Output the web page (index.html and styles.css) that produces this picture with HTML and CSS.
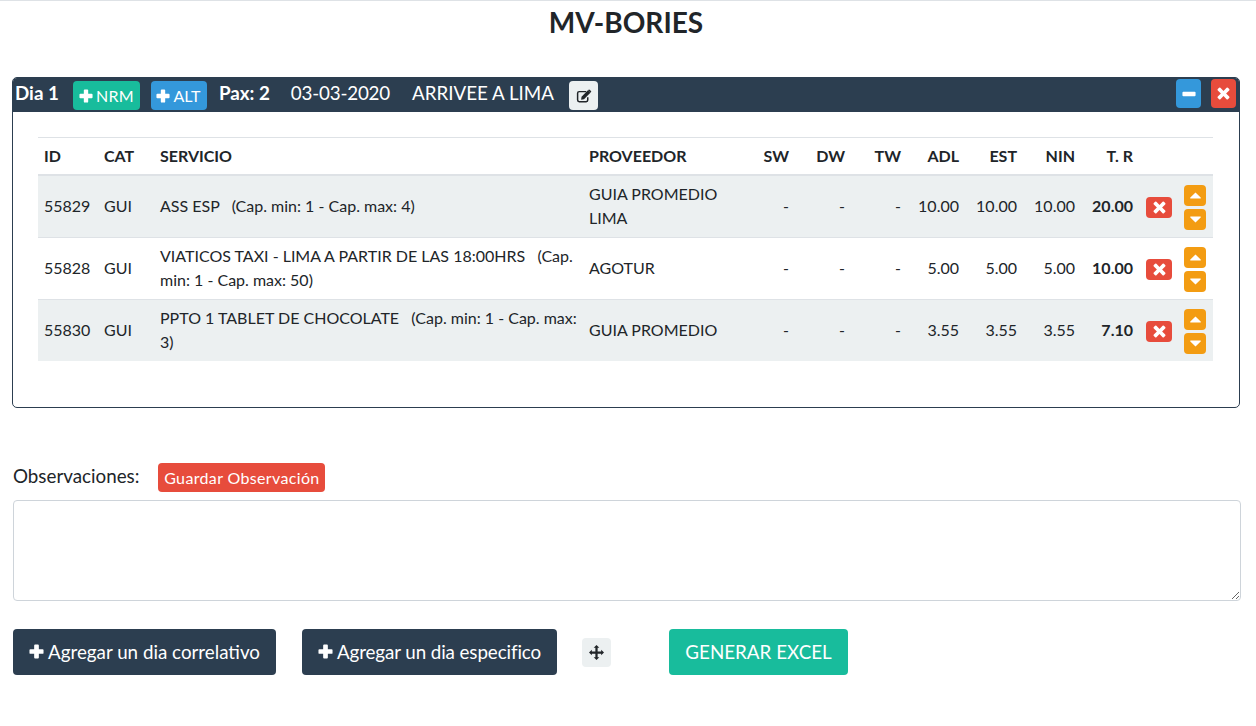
FILE: index.html
```html
<!DOCTYPE html>
<html lang="es">
<head>
<meta charset="utf-8">
<title>MV-BORIES</title>
<link rel="stylesheet" href="styles.css">
</head>
<body>
<svg class="defs" width="0" height="0" aria-hidden="true">
  <symbol id="i-plus" viewBox="0 0 16 16"><path d="M5.500 1.500a1 1 0 0 1 1-1h3a1 1 0 0 1 1 1v4h4a1 1 0 0 1 1 1v3a1 1 0 0 1-1 1h-4v4a1 1 0 0 1-1 1h-3a1 1 0 0 1-1-1v-4h-4a1 1 0 0 1-1-1v-3a1 1 0 0 1 1-1h4z" fill="currentColor"/></symbol>
  <symbol id="i-minus" viewBox="0 0 16 16"><rect x=".5" y="5.500" width="15" height="5" rx="1" fill="currentColor"/></symbol>
  <symbol id="i-times" viewBox="0 0 16 16"><path d="M4.200 1 8 4.800 11.800 1a1.100 1.100 0 0 1 1.600 0L15 2.600a1.100 1.100 0 0 1 0 1.600L11.200 8l3.800 3.800a1.100 1.100 0 0 1 0 1.600L13.400 15a1.100 1.100 0 0 1-1.600 0L8 11.200 4.200 15a1.100 1.100 0 0 1-1.600 0L1 13.400a1.100 1.100 0 0 1 0-1.600L4.800 8 1 4.200a1.100 1.100 0 0 1 0-1.600L2.600 1a1.100 1.100 0 0 1 1.600 0z" fill="currentColor"/></symbol>
  <symbol id="i-up" viewBox="0 0 16 10"><path d="M8 .5 15.500 8a.8.8 0 0 1-.6 1.400H1.100A.8.8 0 0 1 .5 8z" fill="currentColor"/></symbol>
  <symbol id="i-down" viewBox="0 0 16 10"><path d="M8 9.500.5 2A.8.8 0 0 1 1.100.6h13.800a.8.8 0 0 1 .6 1.400z" fill="currentColor"/></symbol>
  <symbol id="i-edit" viewBox="0 0 18 16"><path d="M11.500 3H3.500A1.800 1.800 0 0 0 1.700 4.800v7.900a1.800 1.800 0 0 0 1.800 1.800h8a1.800 1.800 0 0 0 1.800-1.800V9.500" fill="none" stroke="currentColor" stroke-width="1.700"/><path d="M6.200 8.800 13.500 1.500l2.800 2.800-7.300 7.300-3.300.6z" fill="currentColor"/><path d="M14.300.8a.8.8 0 0 1 1.100 0l1.600 1.600a.8.800 0 0 1 0 1.100l-.7.700-2.700-2.700z" fill="currentColor"/></symbol>
  <symbol id="i-move" viewBox="0 0 16 16"><path d="M8 0l3 3H9.200v3.800H13V5l3 3-3 3V9.200H9.200V13H11l-3 3-3-3h1.800V9.200H3V11L0 8l3-3v1.800h3.800V3H5z" fill="currentColor"/></symbol>
</svg>

<main class="page">
  <h1 class="title">MV-BORIES</h1>

  <section class="panel">
    <header class="panel-head">
      <div class="head-left">
        <strong class="day">Dia 1</strong>
        <button class="btn btn-sm btn-green"><svg class="ico"><use href="#i-plus"/></svg>NRM</button>
        <button class="btn btn-sm btn-blue"><svg class="ico"><use href="#i-plus"/></svg>ALT</button>
        <strong class="pax">Pax: 2</strong>
        <span class="date">03-03-2020</span>
        <span class="route">ARRIVEE A LIMA</span>
        <button class="btn btn-icon btn-light"><svg class="ico-edit"><use href="#i-edit"/></svg></button>
      </div>
      <div class="head-right">
        <button class="btn btn-icon btn-blue"><svg class="ico"><use href="#i-minus"/></svg></button>
        <button class="btn btn-icon btn-red"><svg class="ico-x"><use href="#i-times"/></svg></button>
      </div>
    </header>

    <div class="panel-body">
      <table class="grid">
        <colgroup>
          <col class="c-id"><col class="c-cat"><col class="c-serv"><col class="c-prov">
          <col class="c-sw"><col class="c-dw"><col class="c-tw"><col class="c-adl">
          <col class="c-est"><col class="c-nin"><col class="c-tr"><col class="c-del"><col class="c-ord">
        </colgroup>
        <thead>
          <tr>
            <th>ID</th><th>CAT</th><th>SERVICIO</th><th>PROVEEDOR</th>
            <th class="num">SW</th><th class="num">DW</th><th class="num">TW</th>
            <th class="num">ADL</th><th class="num">EST</th><th class="num">NIN</th><th class="num">T. R</th>
            <th></th><th></th>
          </tr>
        </thead>
        <tbody>
          <tr>
            <td>55829</td><td>GUI</td>
            <td>ASS ESP &nbsp;&nbsp;(Cap. min: 1 - Cap. max: 4)</td>
            <td>GUIA PROMEDIO LIMA</td>
            <td class="num">-</td><td class="num">-</td><td class="num">-</td>
            <td class="num">10.00</td><td class="num">10.00</td><td class="num">10.00</td>
            <td class="num total">20.00</td>
            <td><button class="btn btn-del"><svg class="ico-x"><use href="#i-times"/></svg></button></td>
            <td><div class="order"><button class="btn btn-ord"><svg class="caret"><use href="#i-up"/></svg></button><button class="btn btn-ord"><svg class="caret"><use href="#i-down"/></svg></button></div></td>
          </tr>
          <tr>
            <td>55828</td><td>GUI</td>
            <td>VIATICOS TAXI - LIMA A PARTIR DE LAS 18:00HRS &nbsp;&nbsp;(Cap. min: 1 - Cap. max: 50)</td>
            <td>AGOTUR</td>
            <td class="num">-</td><td class="num">-</td><td class="num">-</td>
            <td class="num">5.00</td><td class="num">5.00</td><td class="num">5.00</td>
            <td class="num total">10.00</td>
            <td><button class="btn btn-del"><svg class="ico-x"><use href="#i-times"/></svg></button></td>
            <td><div class="order"><button class="btn btn-ord"><svg class="caret"><use href="#i-up"/></svg></button><button class="btn btn-ord"><svg class="caret"><use href="#i-down"/></svg></button></div></td>
          </tr>
          <tr>
            <td>55830</td><td>GUI</td>
            <td>PPTO 1 TABLET DE CHOCOLATE &nbsp;&nbsp;(Cap. min: 1 - Cap. max: 3)</td>
            <td>GUIA PROMEDIO</td>
            <td class="num">-</td><td class="num">-</td><td class="num">-</td>
            <td class="num">3.55</td><td class="num">3.55</td><td class="num">3.55</td>
            <td class="num total">7.10</td>
            <td><button class="btn btn-del"><svg class="ico-x"><use href="#i-times"/></svg></button></td>
            <td><div class="order"><button class="btn btn-ord"><svg class="caret"><use href="#i-up"/></svg></button><button class="btn btn-ord"><svg class="caret"><use href="#i-down"/></svg></button></div></td>
          </tr>
        </tbody>
      </table>
    </div>
  </section>

  <section class="notes">
    <div class="notes-head">
      <label class="notes-label" for="obs">Observaciones:</label>
      <button class="btn btn-save">Guardar Observación</button>
    </div>
    <textarea id="obs" class="notes-box"></textarea>
  </section>

  <div class="actions">
    <button class="btn btn-lg btn-dark"><svg class="ico-lg"><use href="#i-plus"/></svg>Agregar un dia correlativo</button>
    <button class="btn btn-lg btn-dark"><svg class="ico-lg"><use href="#i-plus"/></svg>Agregar un dia especifico</button>
    <button class="btn btn-icon btn-move"><svg class="ico-move"><use href="#i-move"/></svg></button>
    <button class="btn btn-lg btn-green btn-excel">GENERAR EXCEL</button>
  </div>
</main>
</body>
</html>
```
FILE: styles.css
```css
* { box-sizing: border-box; }
html, body { margin: 0; padding: 0; }
body {
  font-family: Lato, "Liberation Sans", sans-serif;
  font-size: 16px;
  line-height: 24px;
  color: #212529;
  background: #fff;
}
.defs { position: absolute; }
.page {
  border-top: 1px solid #dee2e6;
  padding: 0 15px 0 12px;
}
.title {
  margin: 0;
  padding: 3px 1px 0 0;
  height: 76px;
  font-size: 28px;
  line-height: 36px;
  font-weight: 700;
  text-align: center;
}

.btn {
  display: inline-flex;
  align-items: center;
  justify-content: center;
  border: 0;
  border-radius: 4px;
  padding: 0;
  color: #fff;
  font-family: inherit;
  cursor: pointer;
}
.btn-green { background: #18bc9c; }
.btn-blue { background: #3498db; }
.btn-red { background: #e74c3c; }
.btn-dark { background: #2c3e50; }
.btn-light { background: #ecf0f1; color: #212529; }

.panel {
  width: 1228px;
  height: 331px;
  border: 1px solid #2c3e50;
  border-radius: 5px;
  overflow: hidden;
}
.panel-head {
  display: flex;
  justify-content: space-between;
  height: 34px;
  background: #2c3e50;
  color: #fff;
  padding: 1px 3px 0 2px;
}
.head-left { display: flex; align-items: flex-start; font-size: 18.8px; line-height: 28px; }
.head-right { display: flex; gap: 10px; }
.day { margin-right: 14px; }
.btn-sm {
  height: 29px;
  margin-top: 2px;
  font-size: 16px;
  gap: 3px;
}
.head-left .btn-green { width: 67px; margin-right: 11px; letter-spacing: .3px; }
.head-left .btn-blue { width: 56px; margin-right: 12px; padding-right: 1px; }
.pax { margin-right: 21px; }
.date { margin-right: 22px; letter-spacing: -.2px; }
.route { margin-right: 15px; }
.btn-icon { width: 25px; height: 29px; }
.head-left .btn-icon { width: 29px; margin-top: 2px; }
.ico { width: 14px; height: 14px; }
.ico-x { width: 13px; height: 13px; }
.ico-edit { width: 16px; height: 14px; }

.panel-body { padding: 25px 26px 0 25px; }
.grid {
  width: 1175px;
  table-layout: fixed;
  border-collapse: collapse;
  border-top: 1px solid #dee2e6;
}
.c-id { width: 60px; }
.c-cat { width: 56px; }
.c-serv { width: 429px; }
.c-prov { width: 169px; }
.c-sw { width: 43px; }
.c-dw { width: 56px; }
.c-tw { width: 56px; }
.c-adl { width: 58px; }
.c-est { width: 58px; }
.c-nin { width: 58px; }
.c-tr { width: 58px; }
.c-del { width: 39px; }
.c-ord { width: 35px; }
.grid th {
  padding: 6px;
  height: 37px;
  text-align: left;
  font-weight: 700;
  border-bottom: 2px solid #dee2e6;
  white-space: nowrap;
}
.grid td {
  padding: 6px;
  height: 62px;
  vertical-align: middle;
  background: #ecf0f1;
  border-bottom: 1px solid #dee2e6;
}
.grid tbody tr:nth-child(even) td { background: #fff; }
.grid tbody tr:last-child td { border-bottom: 0; }
.grid .num { text-align: right; }
.grid .total { font-weight: 700; }
.btn-del { display: flex; width: 26px; height: 21px; background: #e74c3c; margin: 3px 0 0 1px; }
.order { display: flex; flex-direction: column; gap: 3px; margin-top: 2px; }
.btn-ord { width: 22px; height: 21px; background: #f39c12; }
.caret { width: 11px; height: 7px; }

.notes { margin-top: 55px; padding-left: 1px; }
.notes-head { display: flex; align-items: flex-start; height: 37px; }
.notes-label { font-size: 18.8px; line-height: 26px; margin-right: 19px; }
.btn-save {
  width: 167px;
  height: 29px;
  background: #e74c3c;
  font-size: 16px;
  letter-spacing: .35px;
}
.notes-box {
  display: block;
  width: 1228px;
  height: 101px;
  border: 1px solid #ced4da;
  border-radius: 4px;
  background: #fff;
}

.actions {
  display: flex;
  align-items: center;
  margin-top: 28px;
  padding-left: 1px;
}
.btn-lg {
  height: 46px;
  font-size: 18.8px;
  gap: 4px;
  padding-bottom: 2px;
}
.actions .btn-dark:nth-child(1) { width: 263px; margin-right: 26px; }
.actions .btn-dark:nth-child(2) { width: 255px; margin-right: 25px; letter-spacing: -.1px; }
.ico-lg { width: 15px; height: 15px; }
.btn-move { width: 29px; background: #ecf0f1; color: #212529; margin-right: 58px; }
.ico-move { width: 15px; height: 15px; }
.btn-excel { width: 179px; }
```
